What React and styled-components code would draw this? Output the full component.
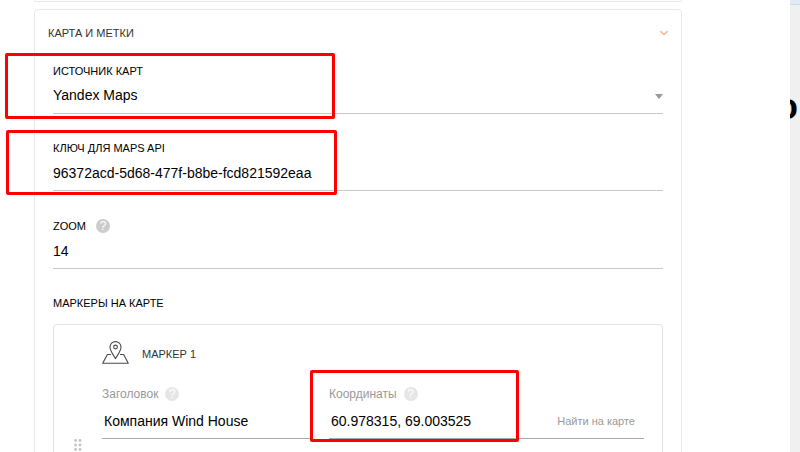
import styled, { createGlobalStyle } from "styled-components"


export default function App(){
    return(
        <>
            <GlobalStyle/>
            <Page>
                <Main>
                    <PrevPanel/>
                    <Panel>
                        <PanelHeader type="button" aria-expanded="true">
                            <span>КАРТА И МЕТКИ</span>
                            <svg width="8" height="6" viewBox="0 0 8 6" fill="none" stroke="#f9a878" strokeWidth="1.3" aria-hidden="true">
                                <path d="M0.5 1.2 4 4.7 7.5 1.2"/>
                            </svg>
                        </PanelHeader>
                        <Fields>
                            <Field>
                                <Label htmlFor="source">ИСТОЧНИК КАРТ</Label>
                                <SelectWrap>
                                    <Select id="source" defaultValue="yandex">
                                        <option value="yandex">Yandex Maps</option>
                                        <option value="google">Google Maps</option>
                                    </Select>
                                    <svg width="8" height="5" viewBox="0 0 8 5" aria-hidden="true">
                                        <path d="M0 0H8L4 5Z" fill="#999"/>
                                    </svg>
                                </SelectWrap>
                            </Field>
                            <Field>
                                <Label htmlFor="key">КЛЮЧ ДЛЯ MAPS API</Label>
                                <Input id="key" defaultValue="96372acd-5d68-477f-b8be-fcd821592eaa"/>
                            </Field>
                            <Field>
                                <LabelRow $gap={10}>
                                    <Label htmlFor="zoom">ZOOM</Label>
                                    <Help type="button">?</Help>
                                </LabelRow>
                                <Input id="zoom" defaultValue="14"/>
                            </Field>
                            <Markers>
                                <GroupTitle>МАРКЕРЫ НА КАРТЕ</GroupTitle>
                                <Marker/>
                            </Markers>
                        </Fields>
                    </Panel>
                </Main>
                <Preview>
                    <PreviewBar/>
                    <PreviewTitle>о</PreviewTitle>
                </Preview>
                {highlights.map((item)=>(
                    <Highlight key={item.id} $box={item}/>
                ))}
            </Page>
        </>
    )
}

function Marker(){
    return(
        <MarkerCard>
            <DragHandle type="button" aria-label="Переместить">
                <svg width="8" height="18" viewBox="0 0 8 18" fill="#c4c4c4">
                    {[1.5, 6, 10.5, 15].map((y)=>(
                        <g key={y}>
                            <circle cx="1.6" cy={y} r="1.4"/>
                            <circle cx="6" cy={y} r="1.4"/>
                        </g>
                    ))}
                </svg>
            </DragHandle>
            <MarkerBody>
                <MarkerHeader>
                    <PinIcon/>
                    <span>МАРКЕР 1</span>
                </MarkerHeader>
                <MarkerFields>
                    <div>
                        <LabelRow $gap={7}>
                            <SmallLabel htmlFor="title">Заголовок</SmallLabel>
                            <Help type="button" $light>?</Help>
                        </LabelRow>
                        <InputRow>
                            <MarkerInput id="title" defaultValue="Компания Wind House"/>
                        </InputRow>
                    </div>
                    <div>
                        <LabelRow $gap={7}>
                            <SmallLabel htmlFor="coords">Координаты</SmallLabel>
                            <Help type="button" $light>?</Help>
                        </LabelRow>
                        <InputRow>
                            <MarkerInput id="coords" defaultValue="60.978315, 69.003525"/>
                            <FindButton type="button">Найти на карте</FindButton>
                        </InputRow>
                    </div>
                </MarkerFields>
            </MarkerBody>
        </MarkerCard>
    )
}

function PinIcon(){
    return(
        <svg width="27" height="23" viewBox="0 0 27 23" fill="none" stroke="#4a4a4a" strokeWidth="1.1" strokeLinejoin="round" aria-hidden="true">
            <path d="M13.5 17.6C11.6 14.4 8 10 8 6.1a5.5 5.5 0 0 1 11 0C19 10 15.4 14.4 13.5 17.6Z"/>
            <circle cx="13.5" cy="6" r="1.9"/>
            <path d="M9 13.5H5.4L0.7 22.3H26.3L21.6 13.5H18"/>
        </svg>
    )
}

const highlights = [
    { id: "source", left: 5, top: 53, width: 330, height: 66 },
    { id: "key", left: 6, top: 130, width: 331, height: 65 },
    { id: "coords", left: 310, top: 370, width: 209, height: 72 },
]

const GlobalStyle = createGlobalStyle`
    *{
        box-sizing: border-box;
    }
    body{
        margin: 0;
        background: #fff;
        color: #000;
        font-family: "Liberation Sans", Arial, sans-serif;
    }
    button, input, select{
        font-family: inherit;
        margin: 0;
        padding: 0;
        border: 0;
        background: none;
        color: inherit;
        outline: none;
    }
`
const Page = styled.div`
    position: relative;
    display: flex;
    height: 100vh;
    overflow: hidden;
`
const Main = styled.main`
    flex: 1;
    min-width: 0;
    padding: 0 108px 0 34px;
`
const PrevPanel = styled.div`
    height: 2px;
    margin-bottom: 7px;
    border: 1px solid #e8e8e8;
    border-top: 0;
    border-radius: 0 0 4px 4px;
`
const Panel = styled.section`
    border: 1px solid #e8e8e8;
    border-radius: 4px;
`
const PanelHeader = styled.button`
    display: flex;
    align-items: center;
    justify-content: space-between;
    width: 100%;
    height: 46px;
    padding: 0 13px;
    font-size: 11px;
    color: #333;
`
const Fields = styled.div`
    display: flex;
    flex-direction: column;
    gap: 25px;
    padding: 6px 18px 18px;
`
const Field = styled.div`
    display: flex;
    flex-direction: column;
`
const Label = styled.label`
    font-size: 11px;
    line-height: 18px;
`
const GroupTitle = styled.h3`
    margin: 0 0 12px;
    font-size: 11px;
    font-weight: normal;
    line-height: 18px;
`
const LabelRow = styled.div`
    display: flex;
    align-items: center;
    gap: ${({$gap}) => $gap}px;
    height: 19px;
`
const Help = styled.button`
    width: 14px;
    height: 14px;
    border-radius: 50%;
    background: ${({$light}) => $light ? "#e6e6e6" : "#ccc"};
    color: #fff;
    font-size: 12px;
    line-height: 14px;
    text-align: center;
`
const Input = styled.input`
    width: 100%;
    height: 34px;
    padding-bottom: 2px;
    border-bottom: 1px solid #c8c8c8;
    font-size: 14px;
`
const SelectWrap = styled.div`
    display: flex;
    align-items: center;
    border-bottom: 1px solid #c8c8c8;
    svg{
        flex: none;
        pointer-events: none;
    }
`
const Select = styled.select`
    flex: 1;
    height: 33px;
    padding-bottom: 4px;
    appearance: none;
    font-size: 14px;
`
const Markers = styled.div`
    display: flex;
    flex-direction: column;
`
const MarkerCard = styled.div`
    display: flex;
    min-height: 250px;
    border: 1px solid #e3e3e3;
    border-radius: 4px;
`
const DragHandle = styled.button`
    width: 48px;
`
const MarkerBody = styled.div`
    flex: 1;
    padding: 15px 18px 18px 0;
`
const MarkerHeader = styled.div`
    display: flex;
    align-items: center;
    gap: 13px;
    height: 24px;
    font-size: 11px;
    color: #333;
    span{
        padding-top: 4px;
    }
`
const MarkerFields = styled.div`
    display: grid;
    grid-template-columns: 2fr 3fr;
    gap: 17px;
    margin-top: 20px;
`
const SmallLabel = styled.label`
    font-size: 12px;
    line-height: 18px;
    color: #999;
`
const InputRow = styled.div`
    display: flex;
    align-items: center;
    height: 36px;
    border-bottom: 1px solid #aaa;
`
const MarkerInput = styled.input`
    flex: 1;
    min-width: 0;
    height: 35px;
    padding-left: 2px;
    font-size: 14px;
`
const FindButton = styled.button`
    padding: 0 9px;
    font-size: 11px;
    color: #999;
`
const Preview = styled.aside`
    width: 10px;
    overflow: hidden;
    background: #f0f0f0;
`
const PreviewBar = styled.div`
    height: 5px;
    background: #dfeaf2;
    border-bottom: 1px solid #c9dbe6;
`
const PreviewTitle = styled.div`
    display: flex;
    justify-content: flex-end;
    width: 8px;
    margin-top: 82px;
    font-size: 36px;
    font-weight: bold;
    line-height: 40px;
`
const Highlight = styled.div`
    position: absolute;
    left: ${({$box}) => $box.left}px;
    top: ${({$box}) => $box.top}px;
    width: ${({$box}) => $box.width}px;
    height: ${({$box}) => $box.height}px;
    border: 3px solid #f00;
    border-radius: 2px;
    pointer-events: none;
`
